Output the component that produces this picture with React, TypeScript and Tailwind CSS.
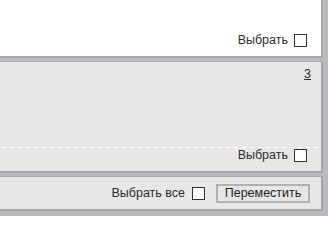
import React from "react";

function Box() {
  return <span className="block w-[13px] h-[13px] border border-[#333] bg-white" />;
}

function Pick({ label }: { label: string }) {
  return (
    <label className="flex items-center gap-[6px] text-[12.5px] leading-[13px] text-[#2b2b2b]">
      <span>{label}</span>
      <Box />
    </label>
  );
}

export default function App() {
  return (
    <div
      className="w-[328px] h-[216px] overflow-hidden bg-[#b7bbc2] flex flex-col"
      style={{ fontFamily: '"Liberation Sans", Arial, sans-serif' }}
    >
      {/* selected item */}
      <div className="w-[323px] h-[58px] shrink-0 bg-white border-b-2 border-r-2 border-[#a7a7a7] flex items-end justify-end pr-[14px] pb-[9px]">
        <Pick label="Выбрать" />
      </div>

      {/* item 3 */}
      <div className="mt-[3px] w-[323px] h-[112px] shrink-0 bg-[#e7e7e7] border-t border-b-2 border-r-2 border-[#a7a7a7] flex flex-col">
        <div className="flex justify-end pt-[6px] pr-[10px]">
          <a href="#" className="text-[12.5px] leading-[13px] text-[#2b2b2b] underline">
            3
          </a>
        </div>
        <div className="flex-1" />
        <div className="h-px bg-[repeating-linear-gradient(90deg,transparent_0_2px,#fff_2px_6px,transparent_6px_8px)]" />
        <div className="mt-[1px] flex justify-end pr-[14px] pb-[9px]">
          <Pick label="Выбрать" />
        </div>
      </div>

      {/* footer actions */}
      <div className="mt-[3px] w-[323px] h-[35px] shrink-0 bg-[#e7e7e7] border-t border-b-2 border-r-2 border-[#a7a7a7] flex items-center justify-end gap-[11px] pr-[11px]">
        <label className="flex items-center gap-[7px] text-[12.5px] leading-[13px] text-[#2b2b2b]">
          <span>Выбрать все</span>
          <Box />
        </label>
        <button className="w-[94px] h-[19px] border-2 border-[#b0b0b0] bg-[#e6e6e6] text-[12.5px] leading-[15px] text-[#1f1f1f]">
          Переместить
        </button>
      </div>
    </div>
  );
}
